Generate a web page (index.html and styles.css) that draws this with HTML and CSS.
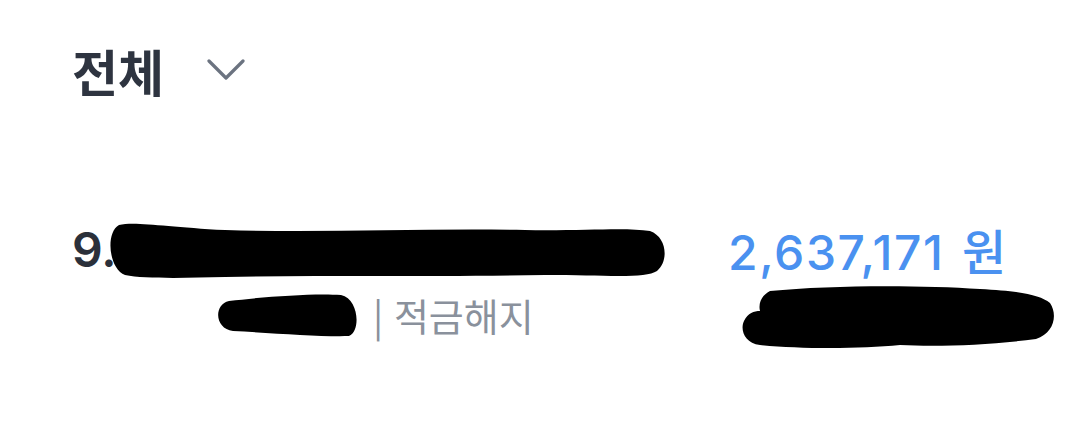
FILE: index.html
```html
<!DOCTYPE html>
<html lang="ko">
<head>
  <meta charset="UTF-8" />
  <title>전체</title>
  <meta name="viewport" content="width=device-width, initial-scale=1.0" />
  <link rel="stylesheet" href="styles.css">
</head>
<body>
  <div class="filter">
    <h1>전체</h1>
    <svg class="chevron" width="38" height="22" viewBox="0 0 38 22">
      <path d="M2 2 L19 19 L36 2" fill="none" stroke="#6b7380" stroke-width="3.2" stroke-linecap="round" stroke-linejoin="round"/>
    </svg>
  </div>

  <div class="account">
    <div class="account-left">
      <div class="account-name">
        <span>9.</span>
        <svg class="redact redact-name" width="564" height="60" viewBox="0 0 564 60">
          <path d="M14 4 C30 0 60 6 120 9 C220 12 320 7 420 9 C480 10 520 6 545 10 C562 16 564 40 552 50 C540 58 500 54 440 54 C320 56 220 54 120 56 C80 57 40 58 20 54 C4 48 0 12 14 4 Z" fill="#000"/>
        </svg>
      </div>
      <div class="account-sub">
        <svg class="redact redact-sub" width="146" height="44" viewBox="0 0 146 44">
          <path d="M16 8 C50 4 100 0 128 2 C146 6 148 38 136 43 C110 44 60 40 20 38 C2 36 0 12 16 8 Z" fill="#000"/>
        </svg>
        <span class="sub-text">| 적금해지</span>
      </div>
    </div>
    <div class="account-right">
      <div class="amount">2,637,171 원</div>
      <svg class="redact redact-amount" width="316" height="68" viewBox="0 0 316 68">
        <path d="M30 8 C90 2 180 2 240 6 C280 8 300 12 310 20 C318 32 314 50 296 56 C250 62 200 64 160 62 C120 66 60 66 20 62 C4 60 0 46 4 38 C8 30 14 28 20 28 C18 20 22 12 30 8 Z" fill="#000"/>
      </svg>
    </div>
  </div>
</body>
</html>
```

FILE: styles.css
```css
* {
  box-sizing: border-box;
}

body {
  margin: 0;
  background: #fff;
  font-family: Inter, "Noto Sans CJK KR", sans-serif;
  color: #2e3440;
}

.filter {
  display: flex;
  align-items: center;
  gap: 43px;
  padding: 40px 0 0 72px;
}

.filter h1 {
  margin: 0;
  font-family: "Noto Sans CJK KR", sans-serif;
  font-size: 50px;
  font-weight: 700;
  line-height: 60px;
  color: #2e3440;
}

.chevron {
  display: block;
}

.account {
  display: flex;
  padding: 121px 0 0 72px;
}

.account-left {
  width: 610px;
  display: flex;
  flex-direction: column;
}

.account-name {
  display: flex;
  align-items: center;
  height: 56px;
  font-size: 48px;
  font-weight: 600;
  color: #2b303a;
}

.redact {
  display: block;
  flex-shrink: 0;
}

.redact-name {
  margin-left: -12px;
  margin-top: 4px;
}

.account-sub {
  display: flex;
  align-items: center;
  gap: 14px;
  margin-top: 16px;
  margin-left: 141px;
}

.sub-text {
  font-family: "Noto Sans CJK KR", sans-serif;
  font-size: 38px;
  line-height: 44px;
  color: #8a919c;
}

.account-right {
  margin-left: 46px;
  display: flex;
  flex-direction: column;
}

.amount {
  height: 56px;
  display: flex;
  align-items: center;
  font-size: 48px;
  font-weight: 500;
  letter-spacing: 1.6px;
  word-spacing: 3px;
  color: #4a91f0;
}

.redact-amount {
  margin-top: 6px;
  margin-left: 12px;
}
```
